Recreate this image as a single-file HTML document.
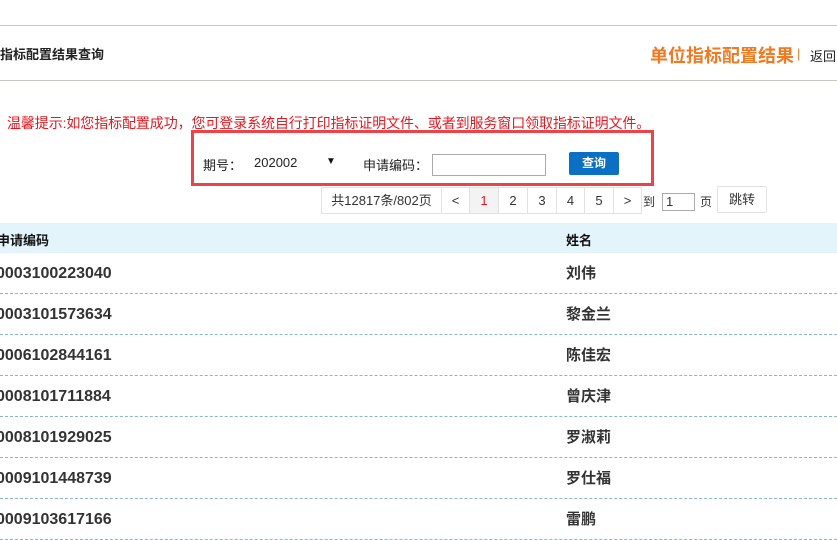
<!DOCTYPE html>
<html><head><meta charset="utf-8">
<style>
*{margin:0;padding:0;box-sizing:border-box}
body{width:837px;height:529px;overflow:hidden;background:#fff;position:relative;font-family:"Liberation Sans","Noto Sans CJK SC",sans-serif;color:#333}
.a{position:absolute;white-space:nowrap}
.hl{position:absolute;left:0;width:837px;height:1px;background:#c8c8c0}
.pg{position:absolute;top:187px;height:27px;border:1px solid #e2e2e2;font-size:13px;line-height:25px;text-align:center;color:#333;background:#fff}
.row{position:absolute;left:0;width:837px;height:41px;border-bottom:1px dashed #8ab8c4}
.row .c{position:absolute;left:-4px;top:12px;font-size:16px;font-weight:bold;color:#333}
.row .n{position:absolute;left:566px;top:9px;font-size:15px;font-weight:bold;color:#333}
</style></head><body>
<div class="hl" style="top:25px"></div>
<div class="hl" style="top:80px"></div>
<div class="a" style="left:0;top:44px;font-size:13px;font-weight:bold;color:#222">指标配置结果查询</div>
<div class="a" style="left:650px;top:42px;font-size:18px;font-weight:bold;color:#f07a22">单位指标配置结果</div>
<div class="a" style="left:797px;top:46px;font-size:13px;color:#f07a22">|</div>
<div class="a" style="left:810px;top:46px;font-size:13px;color:#222">返回</div>
<div class="a" style="left:7px;top:113px;font-size:14px;color:#e8171f;letter-spacing:-0.1px">温馨提示:如您指标配置成功，您可登录系统自行打印指标证明文件、或者到服务窗口领取指标证明文件。</div>
<div class="a" style="left:191px;top:130px;width:463px;height:56px;border:3px solid #e8454a"></div>
<div class="a" style="left:203px;top:155px;font-size:13px;color:#222">期号：</div>
<div class="a" style="left:254px;top:155px;font-size:13px;color:#222">202002</div>
<div class="a" style="left:326px;top:156px;font-size:10px;color:#111">▼</div>
<div class="a" style="left:363px;top:155px;font-size:13px;color:#222">申请编码：</div>
<div class="a" style="left:432px;top:154px;width:114px;height:22px;border:1px solid #aaa"></div>
<div class="a" style="left:569px;top:152px;width:50px;height:23px;background:#0b6fc3;border-radius:2px;color:#fff;font-size:12px;font-weight:bold;line-height:23px;text-align:center">查询</div>
<div class="pg" style="left:321px;width:121px">共12817条/802页</div>
<div class="pg" style="left:441px;width:29px">&lt;</div>
<div class="pg" style="left:469px;width:30px;background:#f3f3f3;color:#e8171f">1</div>
<div class="pg" style="left:498px;width:30px">2</div>
<div class="pg" style="left:527px;width:30px">3</div>
<div class="pg" style="left:556px;width:29px">4</div>
<div class="pg" style="left:584px;width:30px">5</div>
<div class="pg" style="left:613px;width:29px">&gt;</div>
<div class="a" style="left:643px;top:193px;font-size:12px">到</div>
<div class="a" style="left:662px;top:193px;width:33px;height:18px;border:1px solid #aaa;font-size:13px;line-height:16px;padding-left:3px">1</div>
<div class="a" style="left:700px;top:193px;font-size:12px">页</div>
<div class="pg" style="left:717px;top:186px;width:50px;border-radius:2px">跳转</div>
<div class="a" style="left:0;top:223px;width:837px;height:30px;background:#e3f4fb"></div>
<div class="a" style="left:-3px;top:230px;font-size:13px;font-weight:bold;color:#111">申请编码</div>
<div class="a" style="left:566px;top:230px;font-size:13px;font-weight:bold;color:#111">姓名</div>
<div class="row" style="top:253px"><span class="c">0003100223040</span><span class="n">刘伟</span></div>
<div class="row" style="top:294px"><span class="c">0003101573634</span><span class="n">黎金兰</span></div>
<div class="row" style="top:335px"><span class="c">0006102844161</span><span class="n">陈佳宏</span></div>
<div class="row" style="top:376px"><span class="c">0008101711884</span><span class="n">曾庆津</span></div>
<div class="row" style="top:417px"><span class="c">0008101929025</span><span class="n">罗淑莉</span></div>
<div class="row" style="top:458px"><span class="c">0009101448739</span><span class="n">罗仕福</span></div>
<div class="row" style="top:499px"><span class="c">0009103617166</span><span class="n">雷鹏</span></div>
</body></html>
